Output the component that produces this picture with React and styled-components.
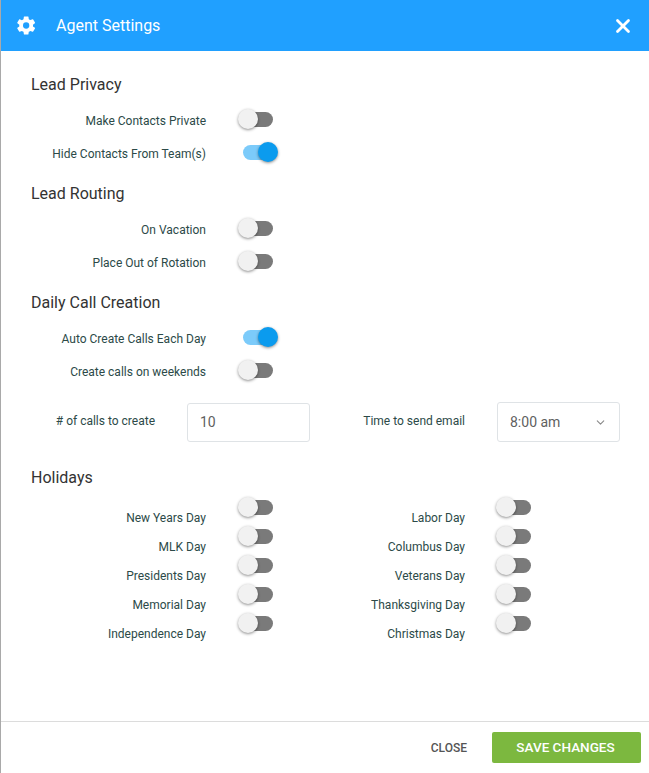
import React from 'react';
import styled, { createGlobalStyle } from 'styled-components';
import { X, ChevronDown } from 'lucide-react';

const Global = createGlobalStyle`
  html, body { margin: 0; padding: 0; background: #fff; }
  body { font-family: Roboto, "Liberation Sans", sans-serif; }
`;

const Modal = styled.div`
  width: 649px;
  height: 773px;
  display: flex;
  flex-direction: column;
  box-sizing: border-box;
  border-left: 1px solid #a9a9a9;
  overflow: hidden;
`;

const Header = styled.header`
  height: 51px;
  flex: none;
  margin-left: -1px;
  padding: 0 16px;
  display: flex;
  align-items: center;
  background: #20a0ff;
  color: #fff;
`;

const Title = styled.h1`
  margin: 0 0 0 19px;
  flex: 1;
  font-size: 16px;
  font-weight: 400;
`;

const CloseIcon = styled(X)`
  margin-right: -1px;
`;

const Body = styled.main`
  flex: 1;
  padding: 24px 0 0 30px;
`;

const Heading = styled.h2`
  margin: 0;
  height: 19px;
  line-height: 19px;
  font-size: 16px;
  font-weight: 400;
  color: #333;
`;

const Rows = styled.div`
  margin: 17px 0 20px;
  display: flex;
  flex-direction: column;
  gap: ${p => p.$gap || 13}px;
`;

const Row = styled.div`
  height: 20px;
  display: flex;
  align-items: center;
`;

const Label = styled.span`
  box-sizing: content-box;
  width: ${p => p.$width || 175}px;
  padding-top: ${p => p.$drop || 0}px;
  font-size: 12px;
  text-align: right;
  white-space: nowrap;
  color: #2c4a48;
`;

const Track = styled.span`
  position: relative;
  flex: none;
  width: 30px;
  height: 15px;
  margin: -4px 0 0 ${p => p.$gap || 37}px;
  border-radius: 8px;
  background: ${p => (p.$on ? '#7ccbfa' : '#7a7a7a')};
`;

const Knob = styled.span`
  position: absolute;
  top: -3px;
  left: ${p => (p.$on ? '15px' : '-5px')};
  width: 20px;
  height: 20px;
  border-radius: 50%;
  background: ${p => (p.$on ? '#0b9bee' : '#f1f1f1')};
  box-shadow: 0 1px 3px rgba(0, 0, 0, 0.45);
`;

const Fields = styled.div`
  display: flex;
  margin: 10px 0 26px;
`;

const Field = styled.div`
  display: flex;
  align-items: center;
  width: ${p => p.$width}px;
`;

const FieldLabel = styled(Label)`
  margin-top: -3px;
`;

const Box = styled.div`
  box-sizing: border-box;
  width: 123px;
  height: ${p => p.$height}px;
  margin-left: ${p => p.$offset}px;
  padding: 0 12px;
  display: flex;
  align-items: center;
  justify-content: space-between;
  border: 1px solid #dfe3e6;
  border-radius: 3px;
  font-size: 14px;
  color: #5f5f5f;
`;

const Columns = styled.div`
  display: flex;
  margin-top: 12px;
`;

const Column = styled(Rows)`
  margin: 0;
`;

const Footer = styled.footer`
  height: 52px;
  flex: none;
  box-sizing: border-box;
  display: flex;
  align-items: center;
  justify-content: flex-end;
  gap: 25px;
  padding: 0 8px 0 0;
  border-top: 1px solid #dcdcdc;
`;

const CloseButton = styled.button`
  padding: 0;
  border: 0;
  background: none;
  font: 500 12px Roboto, sans-serif;
  color: #555;
`;

const SaveButton = styled.button`
  width: 149px;
  height: 31px;
  padding: 0 2px 2px 0;
  border: 0;
  border-radius: 2px;
  background: #7cb83f;
  color: #fff;
  font: 500 13.5px Roboto, sans-serif;
`;

const Toggle = ({ label, on, width, drop, gap }) => (
  <Row>
    <Label $width={width} $drop={drop}>{label}</Label>
    <Track $on={on} $gap={gap}><Knob $on={on} /></Track>
  </Row>
);

const Gear = () => (
  <svg width="21" height="21" viewBox="0 0 24 24" fill="#fff">
    <path fillRule="evenodd" d="M19.4 13c.04-.33.06-.66.06-1s-.02-.67-.06-1l2.2-1.7c.2-.16.25-.43.12-.66l-2.1-3.6c-.13-.23-.4-.31-.63-.23l-2.6 1.04c-.54-.42-1.13-.76-1.77-1.02l-.4-2.76A.5.5 0 0 0 13.7 1.7H9.5a.5.5 0 0 0-.5.42l-.4 2.76c-.64.26-1.23.6-1.77 1.02L4.23 4.86c-.23-.08-.5 0-.63.23l-2.1 3.6c-.13.23-.08.5.12.66L3.8 11c-.04.33-.07.66-.07 1s.03.67.07 1l-2.18 1.7c-.2.16-.25.43-.12.66l2.1 3.6c.13.23.4.31.63.23l2.6-1.04c.54.42 1.13.76 1.77 1.02l.4 2.76c.04.24.25.42.5.42h4.2c.25 0 .46-.18.5-.42l.4-2.76c.64-.26 1.23-.6 1.77-1.02l2.6 1.04c.23.08.5 0 .63-.23l2.1-3.6c.13-.23.08-.5-.12-.66L19.4 13zM11.6 15.6a3.6 3.6 0 1 1 0-7.2 3.6 3.6 0 0 1 0 7.2z" />
  </svg>
);

const leftHolidays = ['New Years Day', 'MLK Day', 'Presidents Day', 'Memorial Day', 'Independence Day'];
const rightHolidays = ['Labor Day', 'Columbus Day', 'Veterans Day', 'Thanksgiving Day', 'Christmas Day'];

export default function App() {
  return (
    <Modal>
      <Global />
      <Header>
        <Gear />
        <Title>Agent Settings</Title>
        <CloseIcon size={22} strokeWidth={3} />
      </Header>
      <Body>
        <Heading>Lead Privacy</Heading>
        <Rows>
          <Toggle label="Make Contacts Private" />
          <Toggle label="Hide Contacts From Team(s)" on />
        </Rows>
        <Heading>Lead Routing</Heading>
        <Rows>
          <Toggle label="On Vacation" />
          <Toggle label="Place Out of Rotation" />
        </Rows>
        <Heading>Daily Call Creation</Heading>
        <Rows>
          <Toggle label="Auto Create Calls Each Day" on />
          <Toggle label="Create calls on weekends" />
        </Rows>
        <Fields>
          <Field $width={280}>
            <FieldLabel $width={124}>
              # of calls to create
            </FieldLabel>
            <Box $height={39} $offset={32}>10</Box>
          </Field>
          <Field $width={310}>
            <FieldLabel $width={154}>
              Time to send email
            </FieldLabel>
            <Box $height={40} $offset={32}>
              8:00 am
              <ChevronDown size={13} color="#8a8a8a" />
            </Box>
          </Field>
        </Fields>
        <Heading>Holidays</Heading>
        <Columns>
          <Column $gap={9}>
            {leftHolidays.map(h => <Toggle key={h} label={h} drop={18} />)}
          </Column>
          <Column $gap={9}>
            {rightHolidays.map(h => <Toggle key={h} label={h} width={192} drop={18} gap={36} />)}
          </Column>
        </Columns>
      </Body>
      <Footer>
        <CloseButton>CLOSE</CloseButton>
        <SaveButton>SAVE CHANGES</SaveButton>
      </Footer>
    </Modal>
  );
}
